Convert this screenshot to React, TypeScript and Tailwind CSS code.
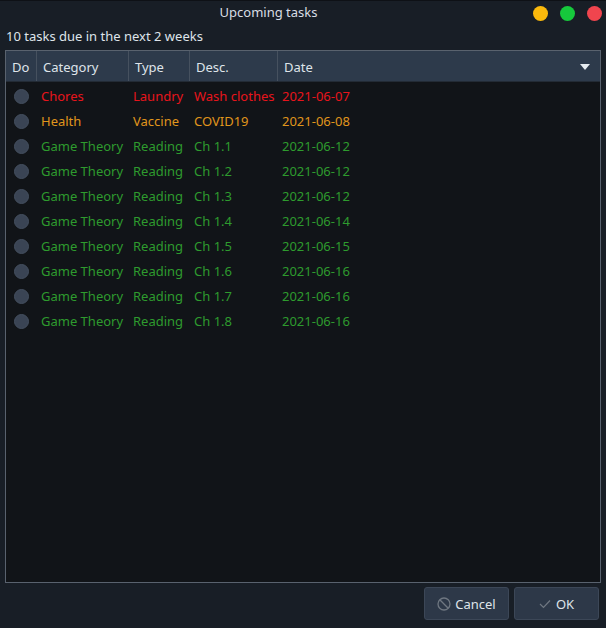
import React from "react";

interface Task {
  category: string;
  type: string;
  desc: string;
  date: string;
  color: string;
}

const RED = "text-[#e8141c]";
const ORANGE = "text-[#e0961c]";
const GREEN = "text-[#2e9b2e]";

const tasks: Task[] = [
  { category: "Chores", type: "Laundry", desc: "Wash clothes", date: "2021-06-07", color: RED },
  { category: "Health", type: "Vaccine", desc: "COVID19", date: "2021-06-08", color: ORANGE },
  { category: "Game Theory", type: "Reading", desc: "Ch 1.1", date: "2021-06-12", color: GREEN },
  { category: "Game Theory", type: "Reading", desc: "Ch 1.2", date: "2021-06-12", color: GREEN },
  { category: "Game Theory", type: "Reading", desc: "Ch 1.3", date: "2021-06-12", color: GREEN },
  { category: "Game Theory", type: "Reading", desc: "Ch 1.4", date: "2021-06-14", color: GREEN },
  { category: "Game Theory", type: "Reading", desc: "Ch 1.5", date: "2021-06-15", color: GREEN },
  { category: "Game Theory", type: "Reading", desc: "Ch 1.6", date: "2021-06-16", color: GREEN },
  { category: "Game Theory", type: "Reading", desc: "Ch 1.7", date: "2021-06-16", color: GREEN },
  { category: "Game Theory", type: "Reading", desc: "Ch 1.8", date: "2021-06-16", color: GREEN },
];

// largeurs des colonnes : Do, Category, Type, Desc., Date
const cols = "grid grid-cols-[31px_92px_61px_88px_1fr]";

export default function App() {
  return (
    <div
      className="w-[606px] h-[628px] flex flex-col bg-[#181e26] text-[#dfe4ea] text-[13px] leading-none"
      style={{ fontFamily: '"Noto Sans", "Open Sans", sans-serif' }}
    >
      {/* barre de titre */}
      <div className="h-[26px] flex items-center border-t border-[#0e1116]">
        <div className="flex-1 flex justify-center text-[#d8dde4] pl-[10px] pb-[2px]">Upcoming tasks</div>
        <div className="flex items-center gap-[12px] pl-[6px] pr-[4px]">
          <span className="w-[15px] h-[15px] rounded-full bg-[#fbb90c]" />
          <span className="w-[15px] h-[15px] rounded-full bg-[#16c93c]" />
          <span className="w-[15px] h-[15px] rounded-full bg-[#f0454e]" />
        </div>
      </div>

      <div className="h-[24px] flex items-center pl-[6px] pb-[4px]">10 tasks due in the next 2 weeks</div>

      {/* tableau */}
      <div className="mx-[5px] h-[533px] border border-[#59626e] bg-[#111418] flex flex-col">
        <div className={`${cols} h-[31px] bg-[#2d3a4b] border-b border-[#232b35] items-stretch`}>
          <div className="flex items-center pl-[6px] pt-[2px] border-r border-[#46515f]">Do</div>
          <div className="flex items-center pl-[6px] pt-[2px] border-r border-[#46515f]">Category</div>
          <div className="flex items-center pl-[6px] pt-[2px] border-r border-[#46515f]">Type</div>
          <div className="flex items-center pl-[6px] pt-[2px] border-r border-[#46515f]">Desc.</div>
          <div className="flex items-center justify-between pl-[6px] pr-[10px] pt-[2px]">
            <span>Date</span>
            <svg width="10" height="6" viewBox="0 0 10 6">
              <path d="M0 0 H10 L5 6 Z" fill="#e6ebf0" />
            </svg>
          </div>
        </div>

        <div className="pt-[2px]">
          {tasks.map((t, i) => (
            <div key={i} className={`${cols} h-[25px] items-center ${t.color}`}>
              <div className="flex justify-center">
                <span className="w-[15px] h-[15px] rounded-full bg-[#3a4454] border border-[#444f5f]" />
              </div>
              <div className="pl-[4px] whitespace-nowrap">{t.category}</div>
              <div className="pl-[4px] whitespace-nowrap">{t.type}</div>
              <div className="pl-[4px] whitespace-nowrap">{t.desc}</div>
              <div className="pl-[4px] whitespace-nowrap">{t.date}</div>
            </div>
          ))}
        </div>
      </div>

      {/* boutons */}
      <div className="flex justify-end gap-[5px] pt-[4px] pr-[7px]">
        <button className="w-[85px] h-[33px] flex items-center justify-center gap-[4px] pt-[1px] bg-[#2d3848] border border-[#3c4757] rounded-[3px] text-[#dfe4ea]">
          <svg width="14" height="14" viewBox="0 0 14 14" fill="none" stroke="#6f7781" strokeWidth="1.3">
            <circle cx="7" cy="7" r="6" />
            <path d="M2.8 2.8 L11.2 11.2" />
          </svg>
          <span>Cancel</span>
        </button>
        <button className="w-[85px] h-[33px] flex items-center justify-center gap-[5px] pt-[1px] bg-[#2d3848] border border-[#3c4757] rounded-[3px] text-[#dfe4ea]">
          <svg width="12" height="10" viewBox="0 0 12 10" fill="none" stroke="#6f7781" strokeWidth="1.2">
            <path d="M1 5 L4.5 8.5 L11 1.5" />
          </svg>
          <span>OK</span>
        </button>
      </div>
    </div>
  );
}
